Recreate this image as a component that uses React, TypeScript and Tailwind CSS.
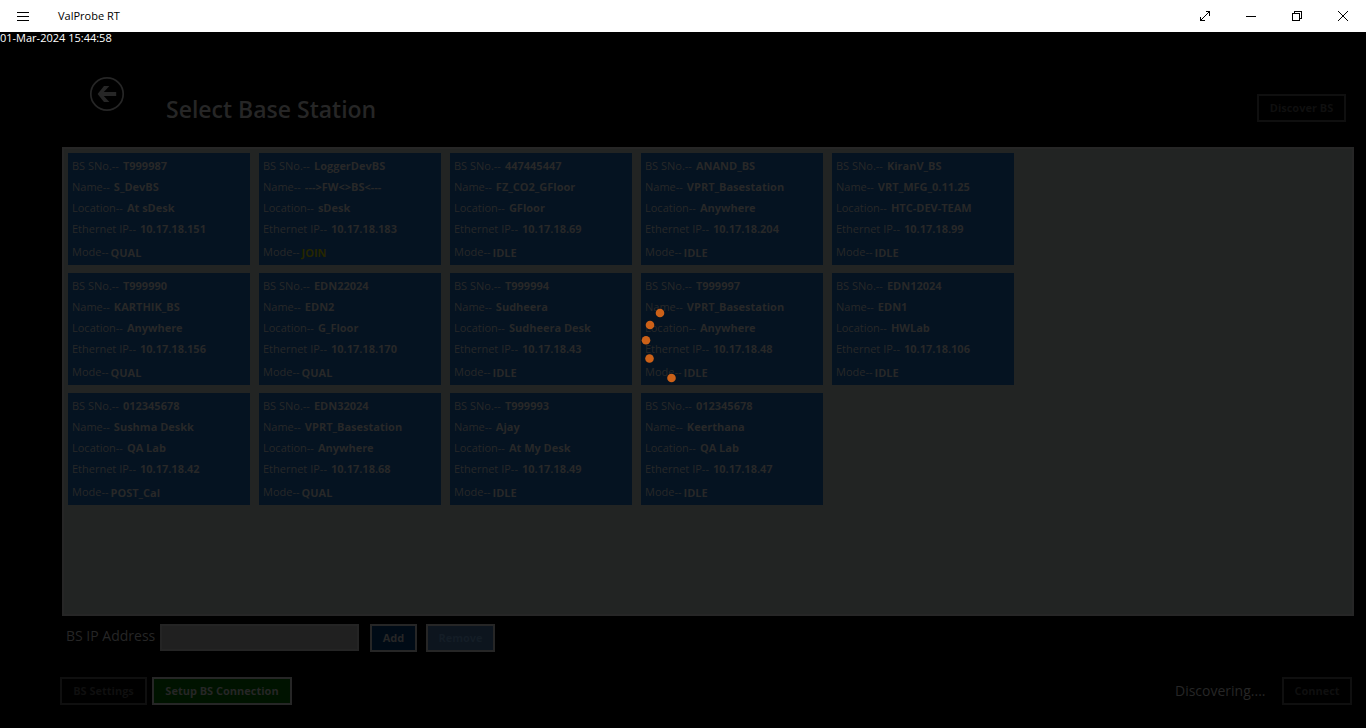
import type { ReactNode } from "react";

type Station = {
  serial: string;
  name: string;
  location: string;
  ip: string;
  mode: string;
};

const stations: Station[] = [
  { serial: "T999987", name: "S_DevBS", location: "At sDesk", ip: "10.17.18.151", mode: "QUAL" },
  { serial: "LoggerDevBS", name: "--->FW<>BS<---", location: "sDesk", ip: "10.17.18.183", mode: "JOIN" },
  { serial: "447445447", name: "FZ_CO2_GFloor", location: "GFloor", ip: "10.17.18.69", mode: "IDLE" },
  { serial: "ANAND_BS", name: "VPRT_Basestation", location: "Anywhere", ip: "10.17.18.204", mode: "IDLE" },
  { serial: "KiranV_BS", name: "VRT_MFG_0.11.25", location: "HTC-DEV-TEAM", ip: "10.17.18.99", mode: "IDLE" },
  { serial: "T999990", name: "KARTHIK_BS", location: "Anywhere", ip: "10.17.18.156", mode: "QUAL" },
  { serial: "EDN22024", name: "EDN2", location: "G_Floor", ip: "10.17.18.170", mode: "QUAL" },
  { serial: "T999994", name: "Sudheera", location: "Sudheera Desk", ip: "10.17.18.43", mode: "IDLE" },
  { serial: "T999997", name: "VPRT_Basestation", location: "Anywhere", ip: "10.17.18.48", mode: "IDLE" },
  { serial: "EDN12024", name: "EDN1", location: "HWLab", ip: "10.17.18.106", mode: "IDLE" },
  { serial: "012345678", name: "Sushma Deskk", location: "QA Lab", ip: "10.17.18.42", mode: "POST_Cal" },
  { serial: "EDN32024", name: "VPRT_Basestation", location: "Anywhere", ip: "10.17.18.68", mode: "QUAL" },
  { serial: "T999993", name: "Ajay", location: "At My Desk", ip: "10.17.18.49", mode: "IDLE" },
  { serial: "012345678", name: "Keerthana", location: "QA Lab", ip: "10.17.18.47", mode: "IDLE" },
];

function Field({ label, value }: { label: string; value: string }) {
  return (
    <p className="flex h-[21px] gap-1 leading-[21px]">
      <span>{label}--</span>
      <span className="font-bold">{value}</span>
    </p>
  );
}

function StationCard({ station }: { station: Station }) {
  return (
    <li className="h-28 w-[182px] overflow-hidden whitespace-nowrap bg-[#051321] px-1 pt-0.5 text-[11px] text-[#282828]">
      <Field label="BS SNo." value={station.serial} />
      <Field label="Name" value={station.name} />
      <Field label="Location" value={station.location} />
      <Field label="Ethernet IP" value={station.ip} />
      <p className="flex gap-0.5 pt-0.5 leading-[21px]">
        <span>Mode--</span>
        <span className={station.mode === "JOIN" ? "pt-px font-bold text-[#262600]" : "pt-px font-bold"}>
          {station.mode}
        </span>
      </p>
    </li>
  );
}

function WindowButton({ label, children }: { label: string; children: ReactNode }) {
  return (
    <button type="button" aria-label={label} className="flex h-8 w-[46px] items-center justify-center">
      <svg width="12" height="12" viewBox="0 0 12 12" fill="none" stroke="#000" shapeRendering="crispEdges">
        {children}
      </svg>
    </button>
  );
}

function Spinner() {
  return (
    <svg
      role="img"
      aria-label="Discovering base stations"
      width="84"
      height="84"
      viewBox="0 0 84 84"
      fill="#cc6118"
      className="pointer-events-none absolute left-1/2 top-[303px] -translate-x-1/2"
    >
      <circle cx="19" cy="10" r="4.3" />
      <circle cx="9" cy="22" r="4.3" />
      <circle cx="5" cy="37.2" r="4.3" />
      <circle cx="8.5" cy="55.5" r="4.3" />
      <circle cx="30.5" cy="75" r="4.3" />
    </svg>
  );
}

export default function App() {
  return (
    <div className="relative flex min-h-screen flex-col bg-black font-['Open_Sans','Noto_Sans',sans-serif]">
      <header className="flex h-8 items-center bg-white text-black">
        <button type="button" aria-label="Menu" className="flex h-8 w-[46px] items-center justify-center">
          <svg width="12" height="9" viewBox="0 0 12 9" stroke="#000" shapeRendering="crispEdges">
            <path d="M0 .5h12M0 4.5h12M0 8.5h12" />
          </svg>
        </button>
        <span className="ml-3 flex-1 text-[11px]">ValProbe RT</span>
        <WindowButton label="Full screen">
          <path d="M1.5 10.5l9-9M6.5 1.5h4v4M1.5 6.5v4h4" />
        </WindowButton>
        <WindowButton label="Minimize">
          <path d="M1 6.5h10" />
        </WindowButton>
        <WindowButton label="Restore">
          <path d="M1.5 3.5h7v7h-7zM3.5 3.5v-2h7v7h-2" />
        </WindowButton>
        <WindowButton label="Close">
          <path d="M1 1l10 10M11 1L1 11" shapeRendering="auto" />
        </WindowButton>
      </header>

      <main className="flex flex-1 flex-col pb-[23px]">
        <time className="text-[11px] leading-3 text-white">01-Mar-2024 15:44:58</time>

        <div className="mt-8 flex h-[71px] items-start pl-[89px] pr-5">
          <button type="button" aria-label="Back">
            <svg width="36" height="36" viewBox="0 0 36 36" fill="none">
              <circle cx="18" cy="18" r="16.2" stroke="#262626" strokeWidth="1.7" />
              <path d="M15 10h5.4l-5.6 6H27.2v4H14.8l5.6 6H15L8.6 18z" fill="#262626" />
            </svg>
          </button>
          <h1 className="ml-[41px] mt-[17px] flex-1 text-[23px] font-semibold leading-8 text-[#262626]">
            Select Base Station
          </h1>
          <button
            type="button"
            disabled
            className="mt-[18px] h-7 w-[89px] border-2 border-[#0f0f0f] text-[11px] font-bold text-[#0f0f0f]"
          >
            Discover BS
          </button>
        </div>

        <ul className="ml-[62px] mr-3 flex flex-1 flex-wrap content-start gap-x-[9px] gap-y-2 border-2 border-[#262626] bg-[#222423] py-1 pl-1 pr-[148px] lg:pr-[330px]">
          {stations.map((station, index) => (
            <StationCard key={index} station={station} />
          ))}
        </ul>

        <div className="mt-2 flex items-start pl-[66px]">
          <label htmlFor="bs-ip" className="w-[94px] whitespace-nowrap text-sm leading-6 text-[#262626]">
            BS IP Address
          </label>
          <input
            id="bs-ip"
            type="text"
            className="h-[27px] w-[199px] border-2 border-[#242424] bg-[#202020] px-2 text-sm text-[#262626] outline-none"
          />
          <button
            type="button"
            className="ml-[11px] h-7 w-[47px] border-2 border-[#262626] bg-[#000b16] text-[11px] font-bold text-[#262626]"
          >
            Add
          </button>
          <button
            type="button"
            disabled
            className="ml-[9px] h-7 w-[69px] border-2 border-[#262626] bg-[#0d151e] text-[11px] font-bold text-[#141d26]"
          >
            Remove
          </button>
        </div>

        <div className="mt-[25px] flex items-center pl-[60px] pr-3.5">
          <button
            type="button"
            disabled
            className="h-7 w-[87px] border-2 border-[#0f0f0f] text-[11px] font-bold text-[#0f0f0f]"
          >
            BS Settings
          </button>
          <button
            type="button"
            className="ml-[5px] h-7 w-[140px] whitespace-nowrap border-2 border-[#262626] bg-[#001300] text-[11px] font-bold text-[#262626]"
          >
            Setup BS Connection
          </button>
          <span role="status" className="ml-auto w-[107px] text-sm leading-6 text-[#262626]">
            Discovering....
          </span>
          <button
            type="button"
            disabled
            className="h-7 w-[70px] border-2 border-[#0f0f0f] text-[11px] font-bold text-[#0f0f0f]"
          >
            Connect
          </button>
        </div>
      </main>

      <Spinner />
    </div>
  );
}
